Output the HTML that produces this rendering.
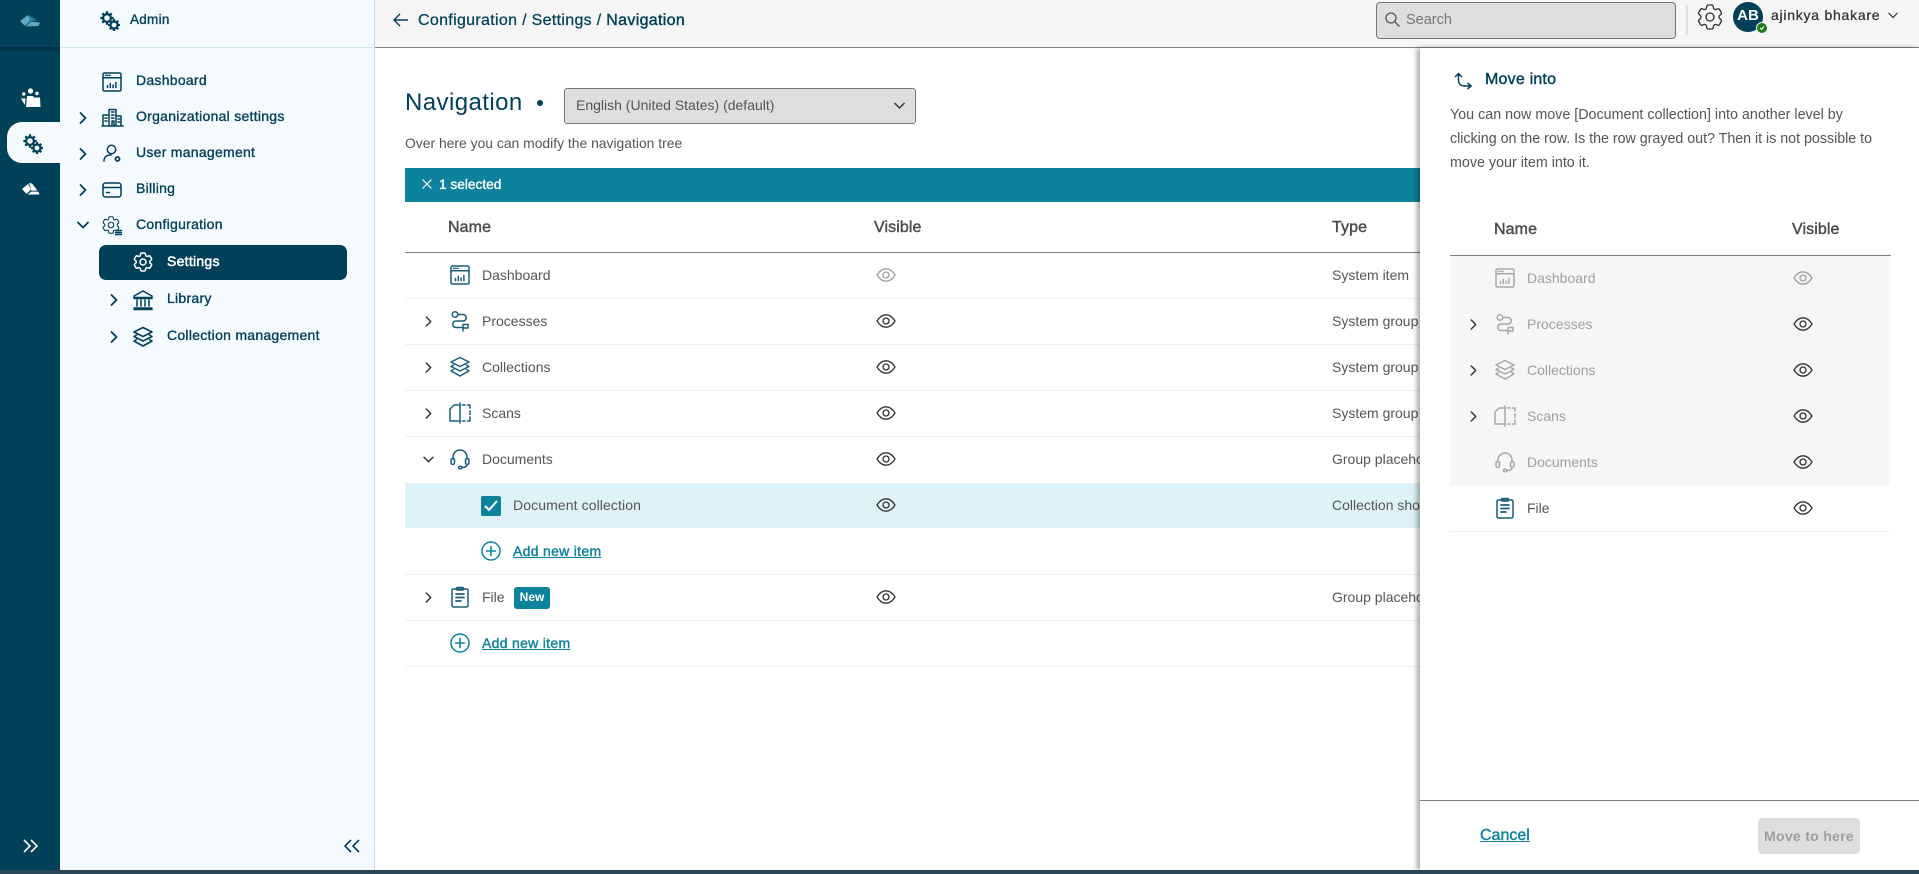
<!DOCTYPE html>
<html><head><meta charset="utf-8"><title>Navigation</title>
<style>
html,body{margin:0;padding:0;width:1919px;height:874px;overflow:hidden;background:#fff;font-family:"Liberation Sans",sans-serif}
.a{position:absolute}
.t{position:absolute;white-space:nowrap;line-height:20px;height:20px}
.n{font-size:14px;color:#004059;-webkit-text-stroke:.35px #004059;letter-spacing:.27px}
.l{font-size:14px;color:#555}
.g{font-size:14px;color:#a0a0a0}
.h{font-size:16px;color:#4a4a4a;-webkit-text-stroke:.4px #4a4a4a;letter-spacing:.1px}
.k{font-size:14px;color:#0d829c;text-decoration:underline;-webkit-text-stroke:.4px #0d829c;letter-spacing:.3px}
.d{position:absolute;height:1px;background:#efefef}
.ty{font-size:14px}
svg.i{position:absolute;overflow:visible;fill:none;stroke:currentColor;stroke-width:1.5;stroke-linecap:round;stroke-linejoin:round}
svg.i20{width:20px;height:20px}
svg.c{width:10px;height:10px;stroke-width:1.8;color:#004059}
svg.m{width:9px;height:9px;stroke-width:1.6;color:#333}
svg.e{width:20px;height:20px;color:#333;stroke-width:1.3}
.b{color:#195e7b}.y{color:#a8a8a8}
</style></head><body>
<svg width="0" height="0" style="position:absolute">
<defs>
<symbol id="cog" viewBox="0 0 24 24" overflow="visible"><path d="M9.594 3.94c.09-.542.56-.94 1.11-.94h2.593c.55 0 1.02.398 1.11.94l.213 1.281c.063.374.313.686.645.87.074.04.147.083.22.127.325.196.72.257 1.075.124l1.217-.456a1.125 1.125 0 0 1 1.37.49l1.296 2.247a1.125 1.125 0 0 1-.26 1.431l-1.003.827c-.293.241-.438.613-.43.992a7.723 7.723 0 0 1 0 .255c-.008.378.137.75.43.991l1.004.827c.424.35.534.955.26 1.43l-1.298 2.247a1.125 1.125 0 0 1-1.369.491l-1.217-.456c-.355-.133-.75-.072-1.076.124a6.47 6.47 0 0 1-.22.128c-.331.183-.581.495-.644.869l-.213 1.281c-.09.543-.56.94-1.11.94h-2.594c-.55 0-1.019-.398-1.11-.94l-.213-1.281c-.062-.374-.312-.686-.644-.87a6.52 6.52 0 0 1-.22-.127c-.325-.196-.72-.257-1.076-.124l-1.217.456a1.125 1.125 0 0 1-1.369-.49l-1.297-2.247a1.125 1.125 0 0 1 .26-1.431l1.004-.827c.292-.24.437-.613.43-.991a6.932 6.932 0 0 1 0-.255c.007-.38-.138-.751-.43-.992l-1.004-.827a1.125 1.125 0 0 1-.26-1.43l1.297-2.247a1.125 1.125 0 0 1 1.37-.491l1.216.456c.356.133.751.072 1.076-.124.072-.044.146-.086.22-.128.332-.183.582-.495.644-.869l.214-1.28Z"/><circle cx="12" cy="12" r="3"/></symbol>
<symbol id="cogs" viewBox="0 0 20 20" overflow="visible">
<g fill="none" stroke="currentColor" stroke-width="2.200"><circle cx="7" cy="7" r="3.900"/><circle cx="14" cy="14" r="3.500"/></g>
<g fill="none" stroke="currentColor" stroke-width="2.300" stroke-linecap="butt"><path d="M7 .3V3M7 11v2.700M.3 7H3M11 7h2.700M2.300 2.300l1.800 1.800M9.800 9.800l1 1M11.700 2.300L9.900 4.100M2.300 11.700l1.800-1.800"/><path d="M14 8v2.400M14 17.600V20M8 14h2.400M17.600 14H20M9.800 9.800l1.700 1.700M16.500 16.500l1.700 1.700M18.200 9.800l-1.700 1.700M9.800 18.200l1.700-1.700"/></g></symbol>
<symbol id="dash" viewBox="0 0 20 20" overflow="visible"><rect x="1" y="1" width="18" height="18" rx="1.500"/><path d="M1 5.800h18M3.500 3.400h.5M5.500 3.400h.5M7.500 3.400h.5M5.500 15.500v-2M8.300 15.500v-4M11.100 15.500v-2.500M13.900 15.500v-5"/></symbol>
<symbol id="proc" viewBox="0 0 20 20" overflow="visible"><circle cx="5" cy="3.500" r="2.700"/><path d="M7.700 3.500h5.300a3.200 3.200 0 0 1 0 6.500H6a3.200 3.200 0 0 0 0 6.500h6"/><path d="M13 20v-6.500h5v3.500h-5"/></symbol>
<symbol id="coll" viewBox="0 0 20 20" overflow="visible"><path d="M10 .5l9 4.500-9 4.500L1 5zM3.500 8L1 9.500l9 4.500 9-4.500L16.500 8M3.500 12.500L1 14l9 5 9-5-2.500-1.500"/></symbol>
<symbol id="scan" viewBox="0 0 20 20" overflow="visible"><path d="M10 0v20"/><path d="M10 2H4L0 6v12h10"/><path d="M12.500 2h2.500M17.500 2H20v3M20 8v3.500M20 14v4h-2.500M15 18h-2.500"/></symbol>
<symbol id="head" viewBox="0 0 20 20" overflow="visible"><path d="M3 10V8a7 7 0 0 1 14 0v2"/><rect x="1" y="9.500" width="3.500" height="6" rx="1.700"/><rect x="15.500" y="9.500" width="3.500" height="6" rx="1.700"/><path d="M17 15.500c0 2-2 3-5 3"/><ellipse cx="10.300" cy="18.500" rx="1.900" ry="1.300"/></symbol>
<symbol id="file" viewBox="0 0 20 20" overflow="visible"><rect x="2" y="2" width="16" height="18" rx="1.500"/><rect x="6.500" y=".5" width="7" height="2.500" rx="1"/><path d="M6 7h8M6 10.500h8M6 14h5" stroke-width="1.700"/></symbol>
<symbol id="eye" viewBox="0 0 20 20" overflow="visible"><path d="M1 10C3.500 6 6.500 3.800 10 3.800S16.500 6 19 10c-2.500 4-5.500 6.200-9 6.200S3.500 14 1 10z"/><circle cx="10" cy="10" r="3"/></symbol>
<symbol id="r" viewBox="0 0 10 10" overflow="visible"><path d="M2.500 0l5 5-5 5"/></symbol>
<symbol id="dn" viewBox="0 0 10 10" overflow="visible"><path d="M0 2.500l5 5 5-5"/></symbol>
<symbol id="plus" viewBox="0 0 20 20" overflow="visible"><circle cx="10" cy="10" r="9"/><path d="M10 5.500v9M5.500 10h9" stroke-width="1.600"/></symbol>
</defs></svg>

<!-- left rail -->
<div class="a" style="left:0;top:0;width:60px;height:874px;background:#004059"></div>
<div class="a" style="left:0;top:0;width:60px;height:47px;background:#004059;box-shadow:0 2px 4px rgba(0,0,0,.35)"></div>
<svg class="a" style="left:19px;top:14px" width="22" height="14" viewBox="0 0 22 14"><path d="M1 7l8-6 2.500 5.500L6 12z" fill="#5aa9c6"/><path d="M9.500 1l8.500 5.500-6.500.5z" fill="#2f7f9d"/><path d="M7 12.500l4.500-5 9.500 1-1.500 3.500z" fill="#5aa9c6"/></svg>
<svg class="a" style="left:20px;top:88px" width="22" height="20" viewBox="0 0 22 20" fill="#fff"><circle cx="10.500" cy="3" r="2.600"/><circle cx="3.700" cy="6" r="1.700"/><circle cx="17" cy="5.500" r="1.700"/><path d="M7 8h6l1 1.500h6l.5 9.500H6zM1 10.500h4.500L4.800 17z"/></svg>
<div class="a" style="left:7px;top:122px;width:53px;height:41px;background:#f5faff;border-radius:15px 0 0 15px"></div>
<svg class="a" style="left:23px;top:134px;color:#004059;overflow:visible" width="20" height="20"><use href="#cogs"/></svg>
<svg class="a" style="left:21px;top:182px" width="19" height="14" viewBox="0 0 19 14" fill="#fff"><path d="M1 7l6-5 3 5.500-4.500 4.500z"/><path d="M8 1l3 .5 5.500 7-6 .2z"/><path d="M6.500 12.500l4-3 7 .2 1 2.800z"/></svg>
<svg class="a" style="left:23px;top:839px;fill:none;stroke:#fff;stroke-width:1.6" width="16" height="14" viewBox="0 0 16 14"><path d="M1 1l6 6-6 6M8 1l6 6-6 6"/></svg>

<!-- nav panel -->
<div class="a" style="left:60px;top:0;width:314px;height:874px;background:#f5faff"></div>
<div class="a" style="left:374px;top:0;width:1px;height:874px;background:#d0d8dc"></div>
<div class="a" style="left:60px;top:47px;width:315px;height:1px;background:#cfe6ef"></div>
<svg class="a" style="left:100px;top:11px;color:#004059;overflow:visible" width="20" height="20"><use href="#cogs"/></svg>
<div class="t n" style="left:130px;top:10px;font-size:13.500px">Admin</div>

<svg class="i i20" style="left:102px;top:72px;color:#004059"><use href="#dash"/></svg>
<div class="t n" style="left:136px;top:70px">Dashboard</div>

<svg class="i c" style="left:78px;top:113px"><use href="#r"/></svg>
<svg class="i i20" style="left:102px;top:107px;color:#004059" viewBox="0 0 20 20"><path d="M7 18V2.500h7V18M1 18V8h6M14 9h5v9M0 19h21M9.500 5h2.500M9.500 8h2.500M9.500 11h2.500M3 11h2M3 14h2M16 12h1.500M16 15h1.500M10 18v-4h2v4"/></svg>
<div class="t n" style="left:136px;top:106px">Organizational settings</div>

<svg class="i c" style="left:78px;top:149px"><use href="#r"/></svg>
<svg class="i i20" style="left:102px;top:144px;color:#004059" viewBox="0 0 20 20"><circle cx="9.500" cy="5.500" r="4.200"/><path d="M2 17c0-4 3-6 7-6"/><circle cx="15.500" cy="15" r="2" stroke-width="1.800"/></svg>
<div class="t n" style="left:136px;top:142px">User management</div>

<svg class="i c" style="left:78px;top:185px"><use href="#r"/></svg>
<svg class="i i20" style="left:102px;top:180px;color:#004059" viewBox="0 0 20 20"><rect x="1" y="3" width="18" height="14" rx="2.500"/><path d="M1 7.500h18M4.500 12.500h3"/></svg>
<div class="t n" style="left:136px;top:178px">Billing</div>

<svg class="i c" style="left:78px;top:220px"><use href="#dn"/></svg>
<svg class="i" style="left:100px;top:214px;width:22px;height:22px;color:#004059;stroke-width:1.200"><use href="#cog"/></svg>
<svg class="i i20" style="left:102px;top:216px;color:#004059"><path d="M13.500 14.500h6M13.500 16.500h6M13.500 18.500h6"/></svg>
<div class="t n" style="left:136px;top:214px">Configuration</div>

<div class="a" style="left:99px;top:245px;width:248px;height:35px;background:#004059;border-radius:7px"></div>
<svg class="i" style="left:131px;top:250px;width:24px;height:24px;color:#fff"><use href="#cog"/></svg>
<div class="t n" style="left:167px;top:251px;color:#fff;-webkit-text-stroke:.5px #fff">Settings</div>

<svg class="i c" style="left:109px;top:295px"><use href="#r"/></svg>
<svg class="i i20" style="left:133px;top:290px;color:#004059" viewBox="0 0 20 20"><path d="M10 1L1 6v1.500h18V6zM1 18h18M1 19.500h18M4 10v6M8 10v6M12 10v6M16 10v6M1 8.500h18"/></svg>
<div class="t n" style="left:167px;top:288px">Library</div>

<svg class="i c" style="left:109px;top:332px"><use href="#r"/></svg>
<svg class="i i20" style="left:133px;top:327px;color:#004059;stroke-width:1.600"><use href="#coll"/></svg>
<div class="t n" style="left:167px;top:325px">Collection management</div>

<svg class="a" style="left:344px;top:839px;fill:none;stroke:#004059;stroke-width:1.600" width="16" height="14" viewBox="0 0 16 14"><path d="M7 1L1 7l6 6M15 1L9 7l6 6"/></svg>

<!-- top bar -->
<div class="a" style="left:375px;top:0;width:1544px;height:47px;background:#f6f6f6;border-bottom:1px solid #7f7f7f"></div>
<svg class="a" style="left:393px;top:13px;fill:none;stroke:#004059;stroke-width:1.400" width="15" height="14" viewBox="0 0 15 14"><path d="M15 7H1M7 1L1 7l6 6"/></svg>
<div class="t" style="left:418px;top:11px;font-size:16px;letter-spacing:.32px;color:#004059;-webkit-text-stroke:.25px #004059">Configuration / Settings / <span style="-webkit-text-stroke:.4px #004059">Navigation</span></div>

<div class="a" style="left:1376px;top:2px;width:298px;height:35px;background:#dedede;border:1px solid #777;border-radius:4px"></div>
<svg class="a" style="left:1385px;top:12px;fill:none;stroke:#555;stroke-width:1.300" width="15" height="15" viewBox="0 0 15 15"><circle cx="6" cy="6" r="5"/><path d="M10 10l4.500 4.500"/></svg>
<div class="t" style="left:1406px;top:10px;font-size:14.500px;color:#777">Search</div>
<div class="a" style="left:1686px;top:5px;width:2px;height:30px;background:#ddd"></div>
<svg class="i" style="left:1694px;top:1px;width:32px;height:32px;color:#333;stroke-width:1"><use href="#cog"/></svg>
<div class="a" style="left:1733px;top:2px;width:30px;height:30px;background:#004059;border-radius:50%"></div>
<div class="t" style="left:1733px;top:6px;width:30px;text-align:center;color:#fff;font-size:15px;font-weight:bold">AB</div>
<div class="a" style="left:1757px;top:23px;width:10px;height:10px;background:#1d7a1d;border-radius:50%;box-shadow:0 0 0 1px #f6f6f6"></div>
<svg class="a" style="left:1759px;top:25px;fill:none;stroke:#fff;stroke-width:1" width="6" height="6" viewBox="0 0 6 6"><path d="M1 3l1.500 1.500L5 1.500"/></svg>
<div class="t" style="left:1771px;top:5px;font-size:14px;color:#333;letter-spacing:.75px;-webkit-text-stroke:.25px #333">ajinkya bhakare</div>
<svg class="a" style="left:1888px;top:12px;fill:none;stroke:#333;stroke-width:1.200" width="10" height="7" viewBox="0 0 10 7"><path d="M.5 1l4.500 4.500L9.500 1"/></svg>

<!-- main -->
<div class="t" style="left:405px;top:88px;font-size:24px;line-height:30px;height:30px;color:#004059;letter-spacing:.42px">Navigation</div>
<div class="a" style="left:537px;top:100px;width:6px;height:6px;border-radius:50%;background:#004059"></div>
<div class="a" style="left:564px;top:88px;width:350px;height:34px;background:#dedede;border:1px solid #777;border-radius:3px"></div>
<div class="t" style="left:576px;top:95px;font-size:14px;color:#555">English (United States) (default)</div>
<svg class="a" style="left:894px;top:102px;fill:none;stroke:#333;stroke-width:1.500" width="11" height="8" viewBox="0 0 11 8"><path d="M.5 1l5 5 5-5"/></svg>
<div class="t" style="left:405px;top:133px;font-size:13.900px;color:#555">Over here you can modify the navigation tree</div>

<div class="a" style="left:405px;top:168px;width:1015px;height:34px;background:#0d829c"></div>
<svg class="a" style="left:422px;top:179px;stroke:#fff;stroke-width:1.200" width="10" height="10" viewBox="0 0 10 10"><path d="M.5.500l9 9M9.500.500l-9 9"/></svg>
<div class="t" style="left:439px;top:175px;font-size:13.700px;color:#fff;-webkit-text-stroke:.35px #fff">1 selected</div>

<div class="t h" style="left:448px;top:218px">Name</div>
<div class="t h" style="left:874px;top:218px">Visible</div>
<div class="t h" style="left:1332px;top:218px">Type</div>
<div class="a" style="left:405px;top:252px;width:1015px;height:1px;background:#7f7f7f"></div>

<!-- rows -->
<svg class="i i20 b" style="left:450px;top:265px"><use href="#dash"/></svg>
<div class="t l" style="left:482px;top:265px">Dashboard</div>
<svg class="i e" style="left:876px;top:265px;color:#a0a0a0"><use href="#eye"/></svg>
<div class="t l ty" style="left:1332px;top:265px">System item</div>
<div class="d" style="left:405px;top:298px;width:1015px"></div>

<svg class="i m" style="left:424px;top:317px"><use href="#r"/></svg>
<svg class="i i20 b" style="left:450px;top:311px"><use href="#proc"/></svg>
<div class="t l" style="left:482px;top:311px">Processes</div>
<svg class="i e" style="left:876px;top:311px"><use href="#eye"/></svg>
<div class="t l ty" style="left:1332px;top:311px">System group</div>
<div class="d" style="left:405px;top:344px;width:1015px"></div>

<svg class="i m" style="left:424px;top:363px"><use href="#r"/></svg>
<svg class="i i20 b" style="left:450px;top:357px"><use href="#coll"/></svg>
<div class="t l" style="left:482px;top:357px">Collections</div>
<svg class="i e" style="left:876px;top:357px"><use href="#eye"/></svg>
<div class="t l ty" style="left:1332px;top:357px">System group</div>
<div class="d" style="left:405px;top:390px;width:1015px"></div>

<svg class="i m" style="left:424px;top:409px"><use href="#r"/></svg>
<svg class="i i20 b" style="left:450px;top:403px"><use href="#scan"/></svg>
<div class="t l" style="left:482px;top:403px">Scans</div>
<svg class="i e" style="left:876px;top:403px"><use href="#eye"/></svg>
<div class="t l ty" style="left:1332px;top:403px">System group</div>
<div class="d" style="left:405px;top:436px;width:1015px"></div>

<svg class="i m" style="left:424px;top:455px"><use href="#dn"/></svg>
<svg class="i i20 b" style="left:450px;top:449px"><use href="#head"/></svg>
<div class="t l" style="left:482px;top:449px">Documents</div>
<svg class="i e" style="left:876px;top:449px"><use href="#eye"/></svg>
<div class="t l ty" style="left:1332px;top:449px">Group placeholder</div>

<div class="a" style="left:405px;top:483px;width:1015px;height:45px;background:#def3f7"></div>
<div class="a" style="left:481px;top:496px;width:20px;height:20px;background:#0d829c;border-radius:2px"></div>
<svg class="a" style="left:484px;top:500px;fill:none;stroke:#fff;stroke-width:2" width="14" height="12" viewBox="0 0 14 12"><path d="M1 6l4 4 8-9"/></svg>
<div class="t l" style="left:513px;top:495px;letter-spacing:.1px">Document collection</div>
<svg class="i e" style="left:876px;top:495px"><use href="#eye"/></svg>
<div class="t l ty" style="left:1332px;top:495px">Collection shortcut</div>

<svg class="i i20" style="left:481px;top:541px;color:#0d829c"><use href="#plus"/></svg>
<div class="t k" style="left:513px;top:541px">Add new item</div>
<div class="d" style="left:405px;top:574px;width:1015px"></div>

<svg class="i m" style="left:424px;top:593px"><use href="#r"/></svg>
<svg class="i i20 b" style="left:450px;top:587px"><use href="#file"/></svg>
<div class="t l" style="left:482px;top:587px">File</div>
<div class="a" style="left:514px;top:587px;width:36px;height:22px;background:#0d829c;border-radius:3px"></div>
<div class="t" style="left:514px;top:587px;width:36px;text-align:center;color:#fff;font-size:12px;font-weight:bold">New</div>
<svg class="i e" style="left:876px;top:587px"><use href="#eye"/></svg>
<div class="t l ty" style="left:1332px;top:587px">Group placeholder</div>
<div class="d" style="left:405px;top:620px;width:1015px"></div>

<svg class="i i20" style="left:450px;top:633px;color:#0d829c"><use href="#plus"/></svg>
<div class="t k" style="left:482px;top:633px">Add new item</div>
<div class="d" style="left:405px;top:666px;width:1015px"></div>

<!-- right panel -->
<div class="a" style="left:1420px;top:48px;width:499px;height:822px;background:#fff;box-shadow:-3px 0 5px rgba(0,0,0,.35)"></div>
<svg class="a" style="left:1454px;top:72px;fill:none;stroke:#004059;stroke-width:1.500" width="18" height="18" viewBox="0 0 18 18"><path d="M1 5l3.500-3.500L8 5M4.500 2v6c0 4 2.500 6 6 6h6M13.500 11l3.500 3-3.500 3"/></svg>
<div class="t" style="left:1485px;top:70px;font-size:16px;color:#004059;-webkit-text-stroke:.4px #004059;letter-spacing:.2px">Move into</div>
<div class="t l" style="left:1450px;top:105px;font-size:14.300px">You can now move [Document collection] into another level by</div>
<div class="t l" style="left:1450px;top:129px;font-size:14.300px;letter-spacing:-.03px">clicking on the row. Is the row grayed out? Then it is not possible to</div>
<div class="t l" style="left:1450px;top:153px;font-size:14.300px">move your item into it.</div>

<div class="t h" style="left:1494px;top:220px">Name</div>
<div class="t h" style="left:1792px;top:220px">Visible</div>
<div class="a" style="left:1450px;top:255px;width:441px;height:1px;background:#7f7f7f"></div>
<div class="a" style="left:1450px;top:256px;width:440px;height:230px;background:#f6f6f6"></div>

<svg class="i i20 y" style="left:1495px;top:268px"><use href="#dash"/></svg>
<div class="t g" style="left:1527px;top:268px">Dashboard</div>
<svg class="i e" style="left:1793px;top:268px;color:#a0a0a0"><use href="#eye"/></svg>

<svg class="i m" style="left:1469px;top:320px"><use href="#r"/></svg>
<svg class="i i20 y" style="left:1495px;top:314px"><use href="#proc"/></svg>
<div class="t g" style="left:1527px;top:314px">Processes</div>
<svg class="i e" style="left:1793px;top:314px"><use href="#eye"/></svg>

<svg class="i m" style="left:1469px;top:366px"><use href="#r"/></svg>
<svg class="i i20 y" style="left:1495px;top:360px"><use href="#coll"/></svg>
<div class="t g" style="left:1527px;top:360px">Collections</div>
<svg class="i e" style="left:1793px;top:360px"><use href="#eye"/></svg>

<svg class="i m" style="left:1469px;top:412px"><use href="#r"/></svg>
<svg class="i i20 y" style="left:1495px;top:406px"><use href="#scan"/></svg>
<div class="t g" style="left:1527px;top:406px">Scans</div>
<svg class="i e" style="left:1793px;top:406px"><use href="#eye"/></svg>

<svg class="i i20 y" style="left:1495px;top:452px"><use href="#head"/></svg>
<div class="t g" style="left:1527px;top:452px">Documents</div>
<svg class="i e" style="left:1793px;top:452px"><use href="#eye"/></svg>

<svg class="i i20 b" style="left:1495px;top:498px"><use href="#file"/></svg>
<div class="t l" style="left:1527px;top:498px">File</div>
<svg class="i e" style="left:1793px;top:498px"><use href="#eye"/></svg>
<div class="d" style="left:1450px;top:531px;width:440px"></div>

<div class="a" style="left:1420px;top:800px;width:499px;height:1px;background:#7f7f7f"></div>
<div class="t" style="left:1480px;top:826px;font-size:16px;color:#0d829c;text-decoration:underline;-webkit-text-stroke:.4px #0d829c">Cancel</div>
<div class="a" style="left:1758px;top:818px;width:102px;height:36px;background:#dedede;border-radius:4px"></div>
<div class="t" style="left:1758px;top:826px;width:102px;text-align:center;font-size:14px;color:#9e9e9e;font-weight:bold;letter-spacing:.3px">Move to here</div>

<div class="a" style="left:0;top:870px;width:1919px;height:4px;background:#2a4555"></div>
</body></html>
